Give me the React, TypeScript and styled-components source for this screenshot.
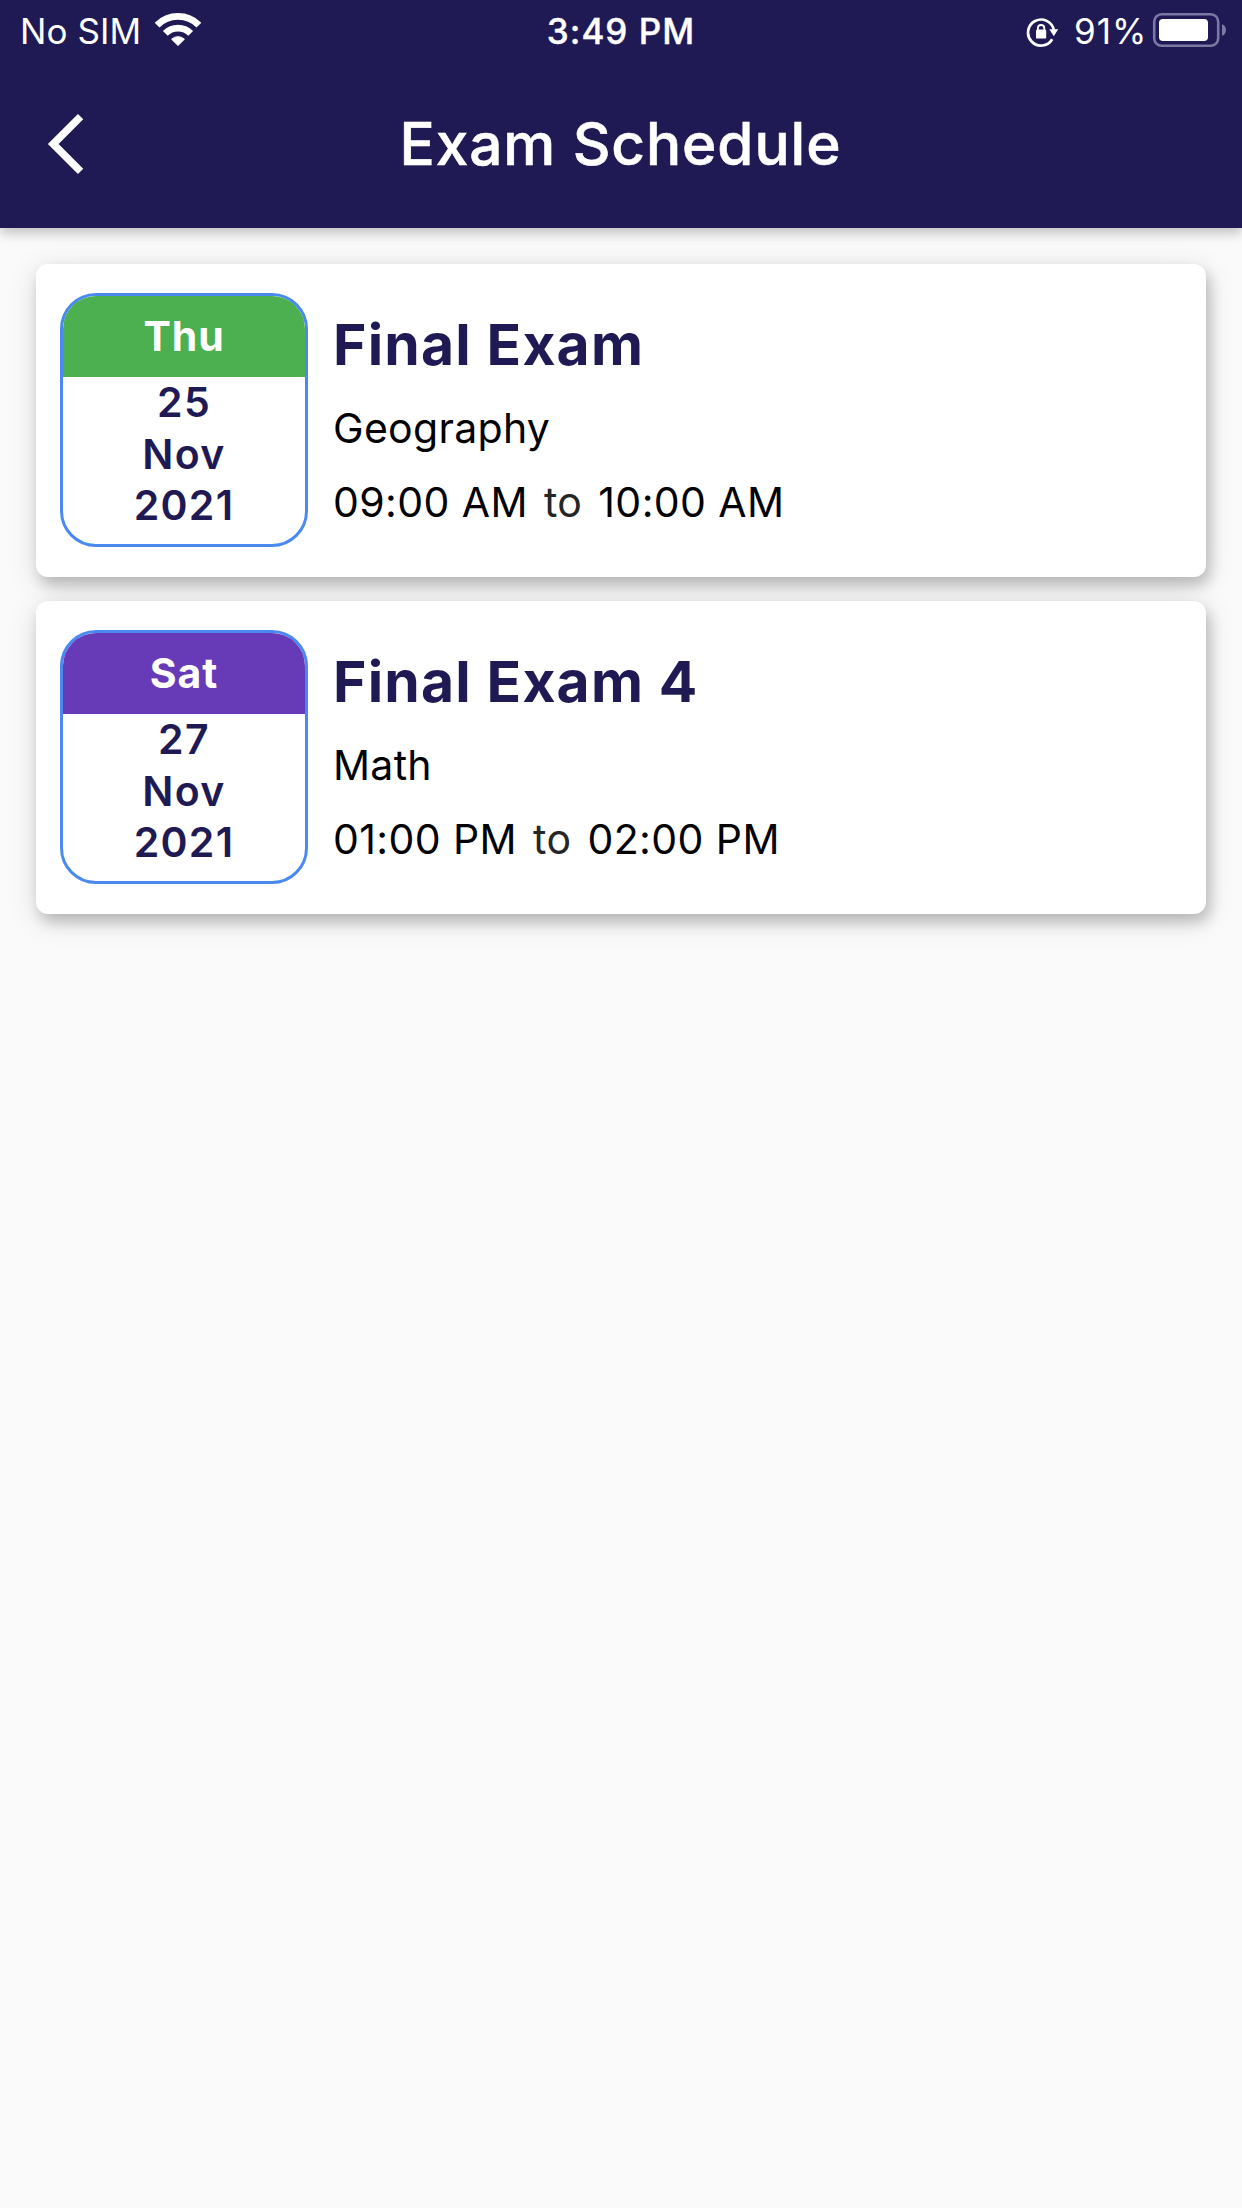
import React from "react";
import styled, { createGlobalStyle } from "styled-components";

const NAVY = "#1f1a54";

const GlobalStyle = createGlobalStyle`
  * { box-sizing: border-box; }
  body { margin: 0; background: #fafafa; }
`;

const Screen = styled.div`
  width: 1242px;
  min-height: 2208px;
  background: #fafafa;
  font-family: Inter, "Liberation Sans", sans-serif;
  white-space: nowrap;
`;

const Header = styled.header`
  height: 228px;
  background: ${NAVY};
  color: #fff;
  box-shadow: 0 3px 15px rgba(0, 0, 0, 0.16), 0 6px 9px rgba(0, 0, 0, 0.1);
`;

const StatusBar = styled.div`
  display: grid;
  grid-template-columns: 1fr auto 1fr;
  height: 60px;
  padding: 0 16px 0 20px;
  font-size: 35px;
  line-height: 62px;
`;

const StatusGroup = styled.div<{ $end?: boolean }>`
  display: flex;
  justify-content: ${(p) => (p.$end ? "flex-end" : "flex-start")};
`;

const Carrier = styled.span`
  width: 134px;
  letter-spacing: 0.1px;
`;

const Clock = styled.span`
  margin-right: 4px;
  font-weight: 500;
  letter-spacing: 1px;
  -webkit-text-stroke: 0.4px #fff;
`;

const Percent = styled.span`
  width: 78px;
  margin-left: 14px;
  letter-spacing: 1px;
`;

const NavBar = styled.div`
  display: grid;
  grid-template-columns: 132px 1fr 132px;
  align-items: center;
  height: 168px;
`;

const BackButton = styled.button`
  display: flex;
  padding: 0 0 0 42px;
  border: 0;
  background: none;
`;

const Title = styled.h1`
  margin: 0 1px 0 0;
  font-size: 58.5px;
  font-weight: 500;
  line-height: 70px;
  letter-spacing: 0.9px;
  text-align: center;
  -webkit-text-stroke: 0.6px #fff;
`;

const List = styled.main`
  display: flex;
  flex-direction: column;
  gap: 24px;
  padding: 36px;
`;

const Card = styled.article`
  display: flex;
  height: 313px;
  padding: 29px 24px;
  border-radius: 12px;
  background: #fff;
  box-shadow: 4px 8px 14px rgba(0, 0, 0, 0.2), 0 6px 30px rgba(0, 0, 0, 0.13);
`;

const DateBox = styled.div`
  width: 248px;
  height: 254px;
  border: 3px solid #4a8af0;
  border-radius: 36px;
  overflow: hidden;
  color: ${NAVY};
  font-size: 41px;
  font-weight: 600;
  text-align: center;
`;

const Weekday = styled.div<{ $color: string }>`
  height: 81.4px;
  background: ${(p) => p.$color};
  color: #fff;
  font-weight: 700;
  line-height: 80px;
  letter-spacing: 0.9px;
`;

const DateLines = styled.div`
  display: flex;
  flex-direction: column;
  line-height: 51.2px;
  letter-spacing: 1.3px;
`;

const Info = styled.div`
  display: flex;
  flex-direction: column;
  margin: 17px 0 0 25px;
  color: #000;
  font-size: 41px;
  font-weight: 400;
  line-height: 50px;
`;

const ExamName = styled.h2`
  margin: 0 0 23.4px;
  color: ${NAVY};
  font-size: 57px;
  font-weight: 700;
  line-height: 70px;
  letter-spacing: 1.2px;
`;

const Subject = styled.div`
  margin-bottom: 24px;
  letter-spacing: 0.3px;
`;

const Times = styled.div`
  display: flex;
  gap: 16px;
  letter-spacing: 0.4px;
`;

const To = styled.span`
  color: #262626;
`;

const WifiIcon = () => (
  <svg width="48" height="48" viewBox="154 0 48 48" fill="none" stroke="#fff">
    <path d="M157.1 25.1A29.5 29.5 0 0 1 198.9 25.1" strokeWidth="6.8" />
    <path d="M165.3 33.3A18 18 0 0 1 190.7 33.3" strokeWidth="6.8" />
    <path d="M178 45.5L171.6 39.2A9.3 9.3 0 0 1 184.4 39.2Z" fill="#fff" strokeWidth="1" strokeLinejoin="round" />
  </svg>
);

const RotationLockIcon = () => (
  <svg width="34" height="60" viewBox="1026 0 34 60" fill="none" stroke="#fff">
    <path d="M1052.2 39.3A13 13 0 1 1 1053.8 30" strokeWidth="2.7" />
    <path d="M1049.3 29.3H1058.2L1053.8 36.3Z" fill="#fff" stroke="none" />
    <rect x="1036" y="29.6" width="10.2" height="9" rx="1.2" fill="#fff" stroke="none" />
    <path d="M1037.9 30V28.2A3.2 3.2 0 0 1 1044.3 28.2V30" strokeWidth="1.8" />
  </svg>
);

const BatteryIcon = () => (
  <svg width="74" height="60" viewBox="1152 0 74 60">
    <rect x="1154.2" y="14.2" width="64" height="31.6" rx="7.5" fill="none" stroke="#7b78a3" strokeWidth="2.6" />
    <rect x="1159" y="19" width="49" height="22" rx="4" fill="#fff" />
    <path d="M1222 24Q1226 26 1226 30T1222 36Z" fill="#7b78a3" />
  </svg>
);

const BackIcon = () => (
  <svg width="48" height="64" viewBox="42 112 48 64" fill="none" stroke="#fff" strokeWidth="7.5">
    <path d="M80.6 116.6L53.2 144L80.6 171.4" />
  </svg>
);

const exams = [
  { day: "Thu", color: "#4caf50", date: "25", month: "Nov", year: "2021", name: "Final Exam", subject: "Geography", from: "09:00 AM", to: "10:00 AM" },
  { day: "Sat", color: "#673ab7", date: "27", month: "Nov", year: "2021", name: "Final Exam 4", subject: "Math", from: "01:00 PM", to: "02:00 PM" },
];

export default function App() {
  return (
    <Screen>
      <GlobalStyle />
      <Header>
        <StatusBar>
          <StatusGroup>
            <Carrier>No SIM</Carrier>
            <WifiIcon />
          </StatusGroup>
          <Clock>3:49 PM</Clock>
          <StatusGroup $end>
            <RotationLockIcon />
            <Percent>91%</Percent>
            <BatteryIcon />
          </StatusGroup>
        </StatusBar>
        <NavBar>
          <BackButton aria-label="Back">
            <BackIcon />
          </BackButton>
          <Title>Exam Schedule</Title>
        </NavBar>
      </Header>
      <List>
        {exams.map((exam) => (
          <Card key={exam.name}>
            <DateBox>
              <Weekday $color={exam.color}>{exam.day}</Weekday>
              <DateLines>
                <span>{exam.date}</span>
                <span>{exam.month}</span>
                <span>{exam.year}</span>
              </DateLines>
            </DateBox>
            <Info>
              <ExamName>{exam.name}</ExamName>
              <Subject>{exam.subject}</Subject>
              <Times>
                <span>{exam.from}</span>
                <To>to</To>
                <span>{exam.to}</span>
              </Times>
            </Info>
          </Card>
        ))}
      </List>
    </Screen>
  );
}
